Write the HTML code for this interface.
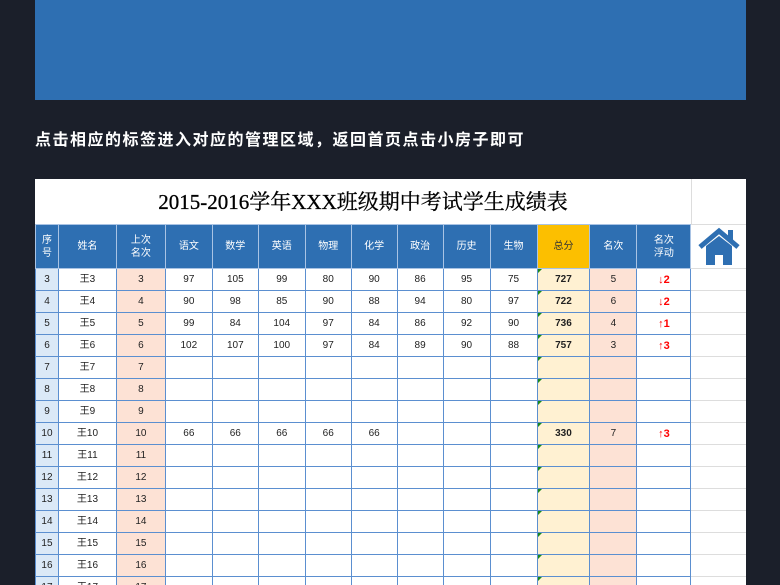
<!DOCTYPE html>
<html><head><meta charset="utf-8">
<style>
*{margin:0;padding:0;box-sizing:border-box}
body{width:780px;height:585px;overflow:hidden;background:#1b1f2a;font-family:"Liberation Sans","Noto Sans CJK SC",sans-serif;position:relative}
.banner{position:absolute;left:35px;top:0;width:711px;height:100px;background:#2e6fb2}
.tip{position:absolute;left:35px;top:126px;color:#fff;font-size:16px;font-weight:bold;letter-spacing:1.5px;white-space:nowrap}
.sheet{position:absolute;left:35px;top:179px;width:711px;height:406px;background:#fff;overflow:hidden}
.title{position:absolute;left:0;top:0;width:656px;height:46px;text-align:center;line-height:46px;font-family:"Liberation Serif","Noto Serif CJK SC",serif;font-size:21px;color:#000;-webkit-text-stroke:0.3px #000}
.tcell{position:absolute;left:656px;top:0;width:55px;height:46px;border-left:1px solid #ddd;border-bottom:1px solid #ddd}
table{position:absolute;left:0;top:45px;border-collapse:collapse;table-layout:fixed}
td{border:1px solid #5b8fd0;height:22px;text-align:center;vertical-align:middle;font-size:10px;line-height:12px;color:#222;font-family:"Liberation Sans","Noto Sans CJK SC",sans-serif;white-space:nowrap;padding:0}
tr.h td{height:44px;background:#2e6fb2;color:#fff;font-size:10px;line-height:13px;border-color:#a9c3e4}
tr.h td.z{background:#fcbf00;color:#333}
td.s{background:#dbe9f7}
td.p{background:#fde2d5}
td.t{background:#fff1d2;font-weight:bold;position:relative}
td.t:before{content:"";position:absolute;left:0;top:0;border-top:4px solid #1a8a1a;border-right:4px solid transparent}
td.r{background:#fde2d5}
td.f{color:#f00;font-weight:bold;font-size:11px}
td.x{border:none;border-bottom:1px solid #ddd;border-left:1px solid #bbb;background:#fff}
tr.h td.x{background:#fff;border-color:#ddd}
</style></head><body>
<div class="banner"></div>
<div class="tip">点击相应的标签进入对应的管理区域，返回首页点击小房子即可</div>
<div class="sheet">
<div class="title">2015-2016学年XXX班级期中考试学生成绩表</div>
<div class="tcell"></div>
<table>
<colgroup><col style="width:23px"><col style="width:58px"><col style="width:49px"><col style="width:47px"><col style="width:46px"><col style="width:47px"><col style="width:46px"><col style="width:46px"><col style="width:46px"><col style="width:47px"><col style="width:47px"><col style="width:53px"><col style="width:47px"><col style="width:54px"><col style="width:55px"></colgroup>
<tr class="h"><td>序<br>号</td><td>姓名</td><td>上次<br>名次</td><td>语文</td><td>数学</td><td>英语</td><td>物理</td><td>化学</td><td>政治</td><td>历史</td><td>生物</td><td class="z">总分</td><td>名次</td><td>名次<br>浮动</td><td class="x"><svg width="42" height="40" viewBox="0 0 42 40" style="display:block;margin:0 auto"><rect x="30" y="4" width="5" height="10" fill="#2e6fb2"/><path d="M2 21 L21 5 L40 21" fill="none" stroke="#2e6fb2" stroke-width="5"/><path d="M8 20 L21 10 L34 20 V39 H25 V29 H17 V39 H8 Z" fill="#2e6fb2"/></svg></td></tr>
<tr><td class="s">3</td><td>王3</td><td class="p">3</td><td>97</td><td>105</td><td>99</td><td>80</td><td>90</td><td>86</td><td>95</td><td>75</td><td class="t">727</td><td class="r">5</td><td class="f">↓2</td><td class="x"></td></tr>
<tr><td class="s">4</td><td>王4</td><td class="p">4</td><td>90</td><td>98</td><td>85</td><td>90</td><td>88</td><td>94</td><td>80</td><td>97</td><td class="t">722</td><td class="r">6</td><td class="f">↓2</td><td class="x"></td></tr>
<tr><td class="s">5</td><td>王5</td><td class="p">5</td><td>99</td><td>84</td><td>104</td><td>97</td><td>84</td><td>86</td><td>92</td><td>90</td><td class="t">736</td><td class="r">4</td><td class="f">↑1</td><td class="x"></td></tr>
<tr><td class="s">6</td><td>王6</td><td class="p">6</td><td>102</td><td>107</td><td>100</td><td>97</td><td>84</td><td>89</td><td>90</td><td>88</td><td class="t">757</td><td class="r">3</td><td class="f">↑3</td><td class="x"></td></tr>
<tr><td class="s">7</td><td>王7</td><td class="p">7</td><td></td><td></td><td></td><td></td><td></td><td></td><td></td><td></td><td class="t"></td><td class="r"></td><td></td><td class="x"></td></tr>
<tr><td class="s">8</td><td>王8</td><td class="p">8</td><td></td><td></td><td></td><td></td><td></td><td></td><td></td><td></td><td class="t"></td><td class="r"></td><td></td><td class="x"></td></tr>
<tr><td class="s">9</td><td>王9</td><td class="p">9</td><td></td><td></td><td></td><td></td><td></td><td></td><td></td><td></td><td class="t"></td><td class="r"></td><td></td><td class="x"></td></tr>
<tr><td class="s">10</td><td>王10</td><td class="p">10</td><td>66</td><td>66</td><td>66</td><td>66</td><td>66</td><td></td><td></td><td></td><td class="t">330</td><td class="r">7</td><td class="f">↑3</td><td class="x"></td></tr>
<tr><td class="s">11</td><td>王11</td><td class="p">11</td><td></td><td></td><td></td><td></td><td></td><td></td><td></td><td></td><td class="t"></td><td class="r"></td><td></td><td class="x"></td></tr>
<tr><td class="s">12</td><td>王12</td><td class="p">12</td><td></td><td></td><td></td><td></td><td></td><td></td><td></td><td></td><td class="t"></td><td class="r"></td><td></td><td class="x"></td></tr>
<tr><td class="s">13</td><td>王13</td><td class="p">13</td><td></td><td></td><td></td><td></td><td></td><td></td><td></td><td></td><td class="t"></td><td class="r"></td><td></td><td class="x"></td></tr>
<tr><td class="s">14</td><td>王14</td><td class="p">14</td><td></td><td></td><td></td><td></td><td></td><td></td><td></td><td></td><td class="t"></td><td class="r"></td><td></td><td class="x"></td></tr>
<tr><td class="s">15</td><td>王15</td><td class="p">15</td><td></td><td></td><td></td><td></td><td></td><td></td><td></td><td></td><td class="t"></td><td class="r"></td><td></td><td class="x"></td></tr>
<tr><td class="s">16</td><td>王16</td><td class="p">16</td><td></td><td></td><td></td><td></td><td></td><td></td><td></td><td></td><td class="t"></td><td class="r"></td><td></td><td class="x"></td></tr>
<tr><td class="s">17</td><td>王17</td><td class="p">17</td><td></td><td></td><td></td><td></td><td></td><td></td><td></td><td></td><td class="t"></td><td class="r"></td><td></td><td class="x"></td></tr>
</table>
</div>
</body></html>
